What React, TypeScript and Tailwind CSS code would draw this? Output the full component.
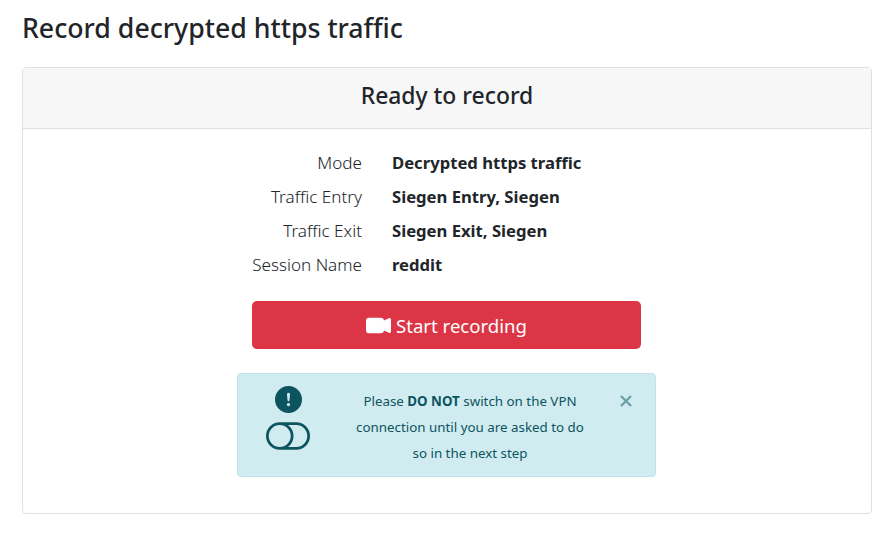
import React from "react";

const rows = [
  ["Mode", "Decrypted https traffic"],
  ["Traffic Entry", "Siegen Entry, Siegen"],
  ["Traffic Exit", "Siegen Exit, Siegen"],
  ["Session Name", "reddit"],
];

export default function App() {
  return (
    <div className="h-[533px] w-[894px] overflow-hidden bg-white px-[22px] pt-[8px] font-['Noto_Sans',sans-serif] text-[#212529]">
      <h1 className="h-[59px] whitespace-nowrap text-[26.7px] font-medium leading-[39px]">
        Record decrypted https traffic
      </h1>
      <section className="h-[447px] rounded border border-[#dfdfdf]">
        <header className="flex h-[61px] justify-center border-b border-[#dfdfdf] bg-[#f7f7f7] pt-[12px]">
          <h2 className="whitespace-nowrap text-[22.9px] font-medium leading-[32px]">Ready to record</h2>
        </header>
        <dl className="pt-[17px]">
          {rows.map(([k, v]) => (
            <div key={k} className="flex h-[34px] gap-[30px] whitespace-nowrap leading-[34px]">
              <dt className="w-[339px] text-right text-[17.1px] font-light">{k}</dt>
              <dd className="text-[16.65px] font-bold">{v}</dd>
            </div>
          ))}
        </dl>
        <button className="ml-[229px] mt-[19px] flex h-[48px] w-[389px] items-center justify-center gap-[5px] rounded-[5px] bg-[#dc3545] text-[18.6px] text-white">
          <svg className="size-[25px]" viewBox="0 0 16 16" fill="currentColor">
            <path d="M0 5a2 2 0 0 1 2-2h7.5a2 2 0 0 1 1.983 1.738l3.11-1.382A1 1 0 0 1 16 4.269v7.462a1 1 0 0 1-1.406.913l-3.111-1.382A2 2 0 0 1 9.5 13H2a2 2 0 0 1-2-2V5z" />
          </svg>
          <span className="w-[131px] whitespace-nowrap pt-[2px] text-left">Start recording</span>
        </button>
        <div className="ml-[214px] mt-[24px] flex h-[104px] w-[419px] rounded border border-[#bee5eb] bg-[#d1ecf1] text-[#0c5460]">
          <div className="flex w-[100px] flex-col items-center pt-[12px]">
            <svg className="size-[27px]" viewBox="0 0 16 16" fill="currentColor">
              <path d="M16 8A8 8 0 1 1 0 8a8 8 0 0 1 16 0zM8 4a.905.905 0 0 0-.9.995l.35 3.507a.552.552 0 0 0 1.1 0l.35-3.507A.905.905 0 0 0 8 4zm.002 6a1 1 0 1 0 0 2 1 1 0 0 0 0-2z" />
            </svg>
            <svg className="mt-[9px] h-[28px] w-[44px]" viewBox="0 3 16 10" fill="currentColor">
              <path d="M11 4a4 4 0 0 1 0 8H8a4.992 4.992 0 0 0 2-4 4.992 4.992 0 0 0-2-4h3zm-6 8a4 4 0 1 1 0-8 4 4 0 0 1 0 8zM0 8a5 5 0 0 0 5 5h6a5 5 0 0 0 0-10H5a5 5 0 0 0-5 5z" />
            </svg>
          </div>
          <p className="w-[264px] whitespace-nowrap pt-[14px] text-center text-[13.35px] leading-[26px]">
            Please <b>DO NOT</b> switch on the VPN
            <br />
            connection until you are asked to do
            <br />
            so in the next step
          </p>
          <button className="ml-[18px] mt-[21px] size-[12px] opacity-50" aria-label="Close">
            <svg className="size-[12px]" viewBox="0 0 12 12" fill="none" stroke="currentColor" strokeWidth="2.3">
              <path d="M1 1 11 11M11 1 1 11" />
            </svg>
          </button>
        </div>
      </section>
    </div>
  );
}
